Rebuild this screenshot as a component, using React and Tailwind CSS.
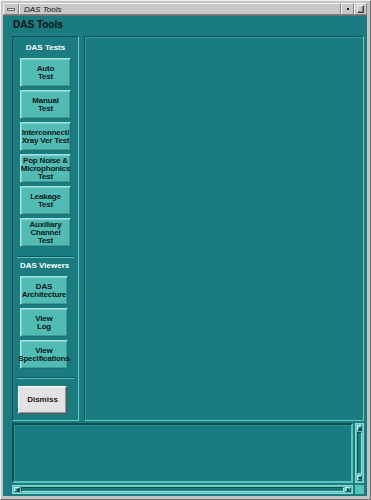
import React from "react";

const font = { fontFamily: '"Liberation Sans", Arial, sans-serif' };

function Btn({ lines, w = "w-[51px]" }) {
  return (
    <div
      className={`${w} h-[29px] shrink-0 flex flex-col items-center justify-center bg-[#52bcb4] border border-t-[#a4e2dc] border-l-[#a4e2dc] border-b-[#1f6f70] border-r-[#1f6f70] shadow-[inset_1px_1px_0_#7fd3cc,inset_-1px_-1px_0_#3a9d98]`}
    >
      {lines.map((l, i) => (
        <div key={i} className="text-[8px] leading-[8px] font-bold text-[#0a1a1a] whitespace-nowrap tracking-[-0.2px]">
          {l}
        </div>
      ))}
    </div>
  );
}

function Sep() {
  return <div className="mx-[4px] h-[2px] border-t border-t-[#0f5a5d] border-b border-b-[#5cbfb9]" />;
}

export default function App() {
  return (
    <div style={font} className="w-[371px] h-[500px] bg-[#c4c4c4] border border-t-[#f0f0f0] border-l-[#f0f0f0] border-b-[#707070] border-r-[#707070] pt-[2px] pl-[2px] pr-[3px] pb-[3px] flex flex-col">
      {/* title bar */}
      <div className="h-[13px] shrink-0 flex items-stretch bg-[#c8c8c8] border-b border-b-[#6e6e6e]">
        <div className="w-[16px] flex items-center justify-center border border-t-[#f4f4f4] border-l-[#f4f4f4] border-b-[#808080] border-r-[#808080]">
          <div className="w-[8px] h-[3px] bg-[#e0e0e0] border border-[#6a6a6a]" />
        </div>
        <div className="flex-1 flex items-center pl-[4px] border border-t-[#f4f4f4] border-l-[#f4f4f4] border-b-[#808080] border-r-[#808080]">
          <div className="text-[8px] leading-[9px] italic text-[#101010]">DAS Tools</div>
        </div>
        <div className="w-[13px] flex items-center justify-center border border-t-[#f4f4f4] border-l-[#f4f4f4] border-b-[#808080] border-r-[#808080]">
          <div className="w-[2px] h-[2px] bg-[#202020]" />
        </div>
        <div className="w-[13px] flex items-center justify-center border border-t-[#f4f4f4] border-l-[#f4f4f4] border-b-[#808080] border-r-[#808080]">
          <div className="w-[7px] h-[8px] border border-t-[#f8f8f8] border-l-[#f8f8f8] border-b-[#404040] border-r-[#404040] shadow-[inset_-1px_-1px_0_#808080]" />
        </div>
      </div>

      {/* teal body */}
      <div className="flex-1 flex flex-col bg-[#1a7b80] pl-[9px] pr-[3px]">
        <div className="h-[20px] shrink-0 pt-[3px] pl-[1px] text-[10px] leading-[12px] font-bold text-[#050f10]">
          DAS Tools
        </div>

        <div className="h-[385px] shrink-0 flex gap-[5px]">
          {/* left panel */}
          <div className="w-[67px] shrink-0 flex flex-col border border-t-[#0d5357] border-l-[#0d5357] border-b-[#6ccac4] border-r-[#6ccac4] pt-[6px]">
            <div className="h-[10px] text-center text-[8px] leading-[10px] font-bold text-white">DAS Tests</div>
            <div className="mt-[5px] flex flex-col items-center gap-[3px]">
              <Btn lines={["Auto", "Test"]} />
              <Btn lines={["Manual", "Test"]} />
              <Btn lines={["Interconnect/", "Xray Ver Test"]} />
              <Btn lines={["Pop Noise &", "Microphonics", "Test"]} />
              <Btn lines={["Leakage", "Test"]} />
              <Btn lines={["Auxiliary", "Channel", "Test"]} />
            </div>
            <div className="mt-[9px]">
              <Sep />
            </div>
            <div className="mt-[3px] h-[10px] pl-[7px] text-[8px] leading-[10px] font-bold text-white whitespace-nowrap">DAS Viewers</div>
            <div className="mt-[5px] flex flex-col items-start pl-[7px] gap-[3px]">
              <Btn lines={["DAS", "Architecture"]} w="w-[48px]" />
              <Btn lines={["View", "Log"]} w="w-[48px]" />
              <Btn lines={["View", "Specifications"]} w="w-[48px]" />
            </div>
            <div className="mt-[8px]">
              <Sep />
            </div>
            <div className="mt-[7px] pl-[5px]">
              <div className="w-[49px] h-[28px] flex items-center justify-center bg-[#e2e2e2] border border-t-[#ffffff] border-l-[#ffffff] border-b-[#555555] border-r-[#555555] shadow-[inset_-1px_-1px_0_#9a9a9a]">
                <div className="text-[8px] leading-[8px] font-bold text-[#1a1a1a]">Dismiss</div>
              </div>
            </div>
          </div>

          {/* main panel */}
          <div className="flex-1 border border-t-[#0d5357] border-l-[#0d5357] border-b-[#6ccac4] border-r-[#6ccac4] shadow-[inset_1px_1px_0_#3c9a9a]" />
        </div>

        {/* bottom text area */}
        <div className="mt-[2px] h-[60px] shrink-0 flex gap-[2px]">
          <div className="flex-1 border-2 border-t-[#0c4e52] border-l-[#0c4e52] border-b-[#5fc3bd] border-r-[#5fc3bd] shadow-[inset_1px_1px_0_#2f8e90]" />
          <div className="w-[9px] flex flex-col bg-[#5bc2bb] border border-[#8ad8d2] p-[1px]">
            <div className="h-[6px] bg-[#5bc2bb] border border-t-[#c8f0ec] border-l-[#c8f0ec] border-b-[#1a5e60] border-r-[#1a5e60] flex items-center justify-center">
              <div className="w-0 h-0 border-l-[2px] border-r-[2px] border-b-[3px] border-l-transparent border-r-transparent border-b-[#0e3a3c]" />
            </div>
            <div className="flex-1 my-[1px] bg-[#1a7b80] border border-t-[#0d5357] border-l-[#0d5357] border-b-[#9ee0da] border-r-[#9ee0da]" />
            <div className="h-[6px] bg-[#5bc2bb] border border-t-[#c8f0ec] border-l-[#c8f0ec] border-b-[#1a5e60] border-r-[#1a5e60] flex items-center justify-center">
              <div className="w-0 h-0 border-l-[2px] border-r-[2px] border-t-[3px] border-l-transparent border-r-transparent border-t-[#0e3a3c]" />
            </div>
          </div>
        </div>

        <div className="mt-[2px] h-[9px] shrink-0 flex gap-[2px]">
          <div className="flex-1 flex bg-[#5bc2bb] border border-[#8ad8d2] p-[1px]">
            <div className="w-[6px] bg-[#5bc2bb] border border-t-[#c8f0ec] border-l-[#c8f0ec] border-b-[#1a5e60] border-r-[#1a5e60] flex items-center justify-center">
              <div className="w-0 h-0 border-t-[2px] border-b-[2px] border-r-[3px] border-t-transparent border-b-transparent border-r-[#0e3a3c]" />
            </div>
            <div className="flex-1 mx-[1px] bg-[#1a7b80] border border-t-[#0d5357] border-l-[#0d5357] border-b-[#9ee0da] border-r-[#9ee0da]" />
            <div className="w-[6px] bg-[#5bc2bb] border border-t-[#c8f0ec] border-l-[#c8f0ec] border-b-[#1a5e60] border-r-[#1a5e60] flex items-center justify-center">
              <div className="w-0 h-0 border-t-[2px] border-b-[2px] border-l-[3px] border-t-transparent border-b-transparent border-l-[#0e3a3c]" />
            </div>
          </div>
          <div className="w-[9px] bg-[#5bc2bb]" />
        </div>
      </div>
    </div>
  );
}
